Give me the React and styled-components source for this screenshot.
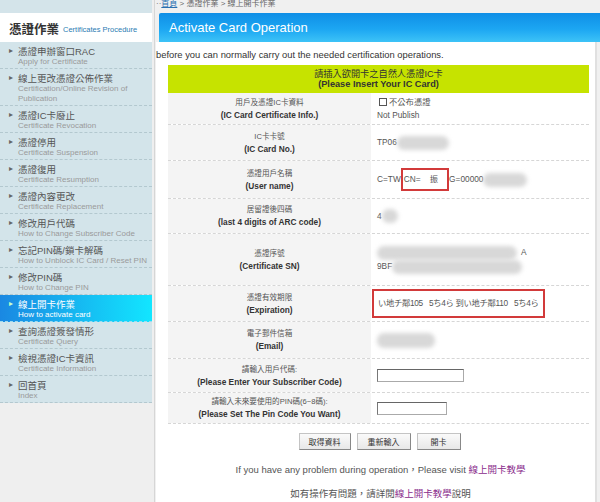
import React from 'react';
import styled, { createGlobalStyle, css } from 'styled-components';

const GlobalStyle = createGlobalStyle`
  html, body {
    margin: 0;
    padding: 0;
    background: #f0f0f0;
  }
  body {
    font-family: "Liberation Sans", Arial, "Noto Sans CJK TC", sans-serif;
    color: #333;
  }
  * {
    box-sizing: border-box;
  }
`;

const Page = styled.div`
  display: flex;
  width: 600px;
  height: 502px;
  overflow: hidden;
`;

const Sidebar = styled.aside`
  width: 155px;
  flex-shrink: 0;
  background: #efefef;
  border-right: 1px solid #d6d6d6;
  padding-right: 2px;
  display: flex;
  flex-direction: column;
`;

const SideTop = styled.div`
  height: 13px;
  flex-shrink: 0;
  background: #d4e4ea;
`;

const SideTitle = styled.div`
  height: 29px;
  flex-shrink: 0;
  background: #fff;
  display: flex;
  align-items: center;
  padding: 1px 0 0 9px;
  gap: 4px;
  white-space: nowrap;
`;

const TitleZh = styled.span`
  font-size: 12.5px;
  font-weight: bold;
  color: #333;
`;

const TitleEn = styled.span`
  font-size: 7.5px;
  color: #2b7cb3;
  padding-top: 2px;
`;

const Menu = styled.ul`
  list-style: none;
  margin: 0;
  padding: 0;
  background: #d3e4ea;
`;

const Item = styled.li`
  border-bottom: 1px dashed #b3c8cf;
  padding: 2px 4px 1px 9px;
  ${(p) =>
    p.active &&
    css`
      background: linear-gradient(to right, #1a88e2, #12e6ff);
      border-bottom-color: #9fdcf0;
    `}
`;

const ItemZh = styled.div`
  display: flex;
  align-items: center;
  height: 13px;
  font-size: 9.5px;
  color: ${(p) => (p.active ? '#fff' : '#555')};
  white-space: nowrap;
  &::before {
    content: '▸';
    width: 9px;
    font-size: 8px;
    color: ${(p) => (p.active ? '#c8ffc8' : '#666')};
  }
`;

const ItemEn = styled.div`
  font-size: 8px;
  line-height: 10px;
  padding-left: 9px;
  color: ${(p) => (p.active ? '#fff' : '#9a9a9a')};
`;

const Main = styled.main`
  flex: 1;
  display: flex;
  flex-direction: column;
  padding-left: 1px;
  min-height: 0;
`;

const Crumb = styled.div`
  height: 13px;
  flex-shrink: 0;
  font-size: 8px;
  line-height: 8px;
  color: #666;
  white-space: nowrap;
  a {
    color: #2a6fb0;
    text-decoration: underline;
  }
`;

const Banner = styled.h1`
  flex-shrink: 0;
  margin: 0 0 0 3px;
  height: 29px;
  display: flex;
  align-items: center;
  padding-left: 10px;
  font-size: 13px;
  font-weight: normal;
  color: #fff;
  background: linear-gradient(to bottom, #0f8ee6 0%, #1ca6f2 55%, #3dc3f7 100%);
  border-radius: 2px 0 0 0;
`;

const Panel = styled.section`
  flex: 1;
  min-height: 0;
  background: #fff;
  border-right: 2px solid #e0e0e0;
  margin-right: 3px;
  display: flex;
  flex-direction: column;
`;

const Intro = styled.p`
  margin: 6px 0 0 0;
  font-size: 9.4px;
  line-height: 13px;
  color: #333;
  white-space: nowrap;
`;

const Table = styled.div`
  margin: 4px 0 0 12px;
  width: 421px;
  display: flex;
  flex-direction: column;
`;

const GreenHead = styled.div`
  height: 28px;
  background: #c6e300;
  display: flex;
  flex-direction: column;
  justify-content: center;
  align-items: center;
  font-size: 9.2px;
  line-height: 10px;
  color: #333;
  font-weight: bold;
  span:first-child {
    font-weight: normal;
  }
`;

const Row = styled.div`
  display: grid;
  grid-template-columns: 203px 1fr;
  height: ${(p) => p.h}px;
  border-bottom: 1px dashed #d6d6d6;
`;

const Label = styled.div`
  background: #f4f4f4;
  display: flex;
  flex-direction: column;
  justify-content: center;
  align-items: center;
  font-size: 7.6px;
  line-height: 13px;
  color: #555;
  b {
    font-size: 8.3px;
    color: #333;
  }
`;

const Value = styled.div`
  display: flex;
  flex-direction: column;
  justify-content: center;
  padding-left: 6px;
  font-size: 8.3px;
  line-height: 13px;
  color: #555;
`;

const Line = styled.div`
  display: flex;
  align-items: center;
  white-space: nowrap;
`;

const Blur = styled.span`
  display: inline-block;
  width: ${(p) => p.w}px;
  height: ${(p) => p.hh || 13}px;
  background: #d8d8d8;
  border-radius: 7px;
  filter: blur(2px);
`;

const RedBox = styled.span`
  display: inline-flex;
  align-items: center;
  border: 2px solid #d23a3a;
  padding: ${(p) => p.pad || '3px 4px'};
  margin-left: ${(p) => p.ml || 0}px;
  letter-spacing: ${(p) => p.ls || 0}px;
`;

const Check = styled.span`
  display: inline-block;
  width: 8px;
  height: 8px;
  border: 1px solid #555;
  margin: 0 2px 0 2px;
`;

const Field = styled.input`
  width: ${(p) => p.w}px;
  height: 13px;
  border: 1px solid #aaa;
  border-top-color: #666;
  border-left-color: #777;
  padding: 0;
  margin: 0;
`;

const Buttons = styled.div`
  display: flex;
  justify-content: center;
  gap: 6px;
  margin-top: 9px;
  padding-left: 8px;
`;

const Button = styled.button`
  width: ${(p) => p.w}px;
  height: 17px;
  padding: 0;
  font-family: inherit;
  font-size: 8px;
  color: #333;
  background: linear-gradient(to bottom, #fafafa, #e8e8e8);
  border: 1px solid #c4c4c4;
  border-right-color: #888;
  border-bottom-color: #888;
`;

const Note = styled.p`
  margin: ${(p) => p.mt}px 0 0 0;
  text-align: center;
  font-size: 9.5px;
  line-height: 13px;
  color: #555;
  padding-left: 10px;
  a {
    color: #8a2c8c;
    text-decoration: none;
  }
`;

const menu = [
  ['憑證申辦窗口RAC', 'Apply for Certificate'],
  ['線上更改憑證公佈作業', 'Certification/Online Revision of Publication'],
  ['憑證IC卡廢止', 'Certificate Revocation'],
  ['憑證停用', 'Certificate Suspension'],
  ['憑證復用', 'Certificate Resumption'],
  ['憑證內容更改', 'Certificate Replacement'],
  ['修改用戶代碼', 'How to Change Subscriber Code'],
  ['忘記PIN碼/鎖卡解碼', 'How to Unblock IC Card / Reset PIN'],
  ['修改PIN碼', 'How to Change PIN'],
  ['線上開卡作業', 'How to activate card', true],
  ['查詢憑證簽發情形', 'Certificate Query'],
  ['檢視憑證IC卡資訊', 'Certificate Information'],
  ['回首頁', 'Index'],
];

export default function App() {
  return (
    <>
      <GlobalStyle />
      <Page>
        <Sidebar>
          <SideTop />
          <SideTitle>
            <TitleZh>憑證作業</TitleZh>
            <TitleEn>Certificates Procedure</TitleEn>
          </SideTitle>
          <Menu>
            {menu.map(([zh, en, active]) => (
              <Item key={zh} active={active}>
                <ItemZh active={active}>{zh}</ItemZh>
                <ItemEn active={active}>{en}</ItemEn>
              </Item>
            ))}
          </Menu>
        </Sidebar>

        <Main>
          <Crumb>
            ··<a>首頁</a> &gt; 憑證作業 &gt; 線上開卡作業
          </Crumb>
          <Banner>Activate Card Operation</Banner>
          <Panel>
            <Intro>before you can normally carry out the needed certification operations.</Intro>
            <Table>
              <GreenHead>
                <span>請插入欲開卡之自然人憑證IC卡</span>
                <span>(Please Insert Your IC Card)</span>
              </GreenHead>

              <Row h={32}>
                <Label>
                  <span>用戶及憑證IC卡資料</span>
                  <b>(IC Card Certificate Info.)</b>
                </Label>
                <Value>
                  <Line>
                    <Check />
                    不公布憑證
                  </Line>
                  <Line>Not Publish</Line>
                </Value>
              </Row>

              <Row h={36}>
                <Label>
                  <span>IC卡卡號</span>
                  <b>(IC Card No.)</b>
                </Label>
                <Value>
                  <Line>
                    TP06
                    <Blur w={52} hh={14} />
                  </Line>
                </Value>
              </Row>

              <Row h={38}>
                <Label>
                  <span>憑證用戶名稱</span>
                  <b>(User name)</b>
                </Label>
                <Value>
                  <Line>
                    C=TW
                    <RedBox pad="3px 9px 3px 1px">CN=&nbsp;&nbsp;&nbsp;&nbsp;振</RedBox>
                    G=00000
                    <Blur w={44} hh={14} />
                  </Line>
                </Value>
              </Row>

              <Row h={35}>
                <Label>
                  <span>居留證後四碼</span>
                  <b>(last 4 digits of ARC code)</b>
                </Label>
                <Value>
                  <Line>
                    4<Blur w={16} hh={14} />
                  </Line>
                </Value>
              </Row>

              <Row h={52}>
                <Label>
                  <span>憑證序號</span>
                  <b>(Certificate SN)</b>
                </Label>
                <Value>
                  <Line>
                    <Blur w={140} hh={14} />
                    <span style={{ marginLeft: 4 }}>A</span>
                  </Line>
                  <Line>
                    9BF
                    <Blur w={130} hh={14} />
                  </Line>
                </Value>
              </Row>

              <Row h={36}>
                <Label>
                  <span>憑證有效期限</span>
                  <b>(Expiration)</b>
                </Label>
                <Value>
                  <Line>
                    <RedBox pad="6px 4px" ml={-5} ls={-0.3}>
                      い地チ鄰105&nbsp;&nbsp;&nbsp;5ち4ら 到い地チ鄰110&nbsp;&nbsp;&nbsp;5ち4ら
                    </RedBox>
                  </Line>
                </Value>
              </Row>

              <Row h={37}>
                <Label>
                  <span>電子郵件信箱</span>
                  <b>(Email)</b>
                </Label>
                <Value>
                  <Line>
                    <Blur w={58} hh={15} />
                  </Line>
                </Value>
              </Row>

              <Row h={34}>
                <Label>
                  <span>請輸入用戶代碼:</span>
                  <b>(Please Enter Your Subscriber Code)</b>
                </Label>
                <Value>
                  <Line>
                    <Field w={87} />
                  </Line>
                </Value>
              </Row>

              <Row h={31}>
                <Label>
                  <span>請輸入未來要使用的PIN碼(6~8碼):</span>
                  <b>(Please Set The Pin Code You Want)</b>
                </Label>
                <Value>
                  <Line>
                    <Field w={70} />
                  </Line>
                </Value>
              </Row>
            </Table>

            <Buttons>
              <Button w={52}>取得資料</Button>
              <Button w={54}>重新輸入</Button>
              <Button w={44}>開卡</Button>
            </Buttons>

            <Note mt={13}>
              If you have any problem during operation，Please visit <a>線上開卡教學</a>
            </Note>
            <Note mt={11}>
              如有操作有問題，請詳閱<a>線上開卡教學</a>說明
            </Note>
          </Panel>
        </Main>
      </Page>
    </>
  );
}
